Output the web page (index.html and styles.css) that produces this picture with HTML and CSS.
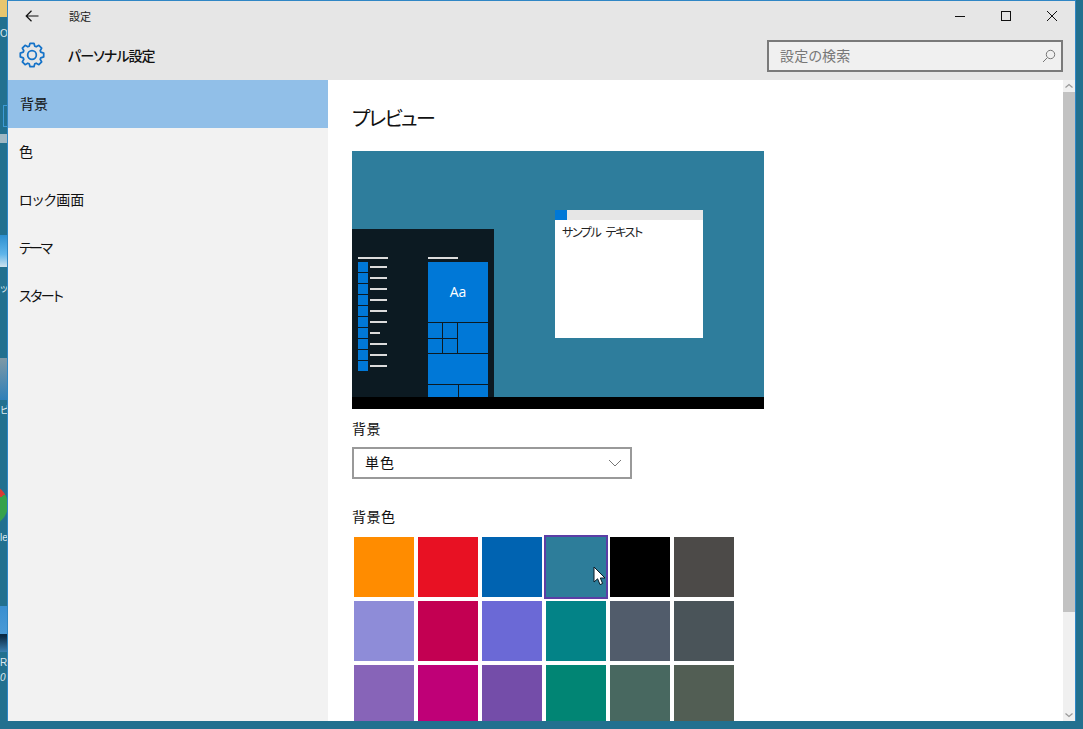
FILE: index.html
```html
<!DOCTYPE html>
<html lang="ja">
<head>
<meta charset="utf-8">
<title>設定</title>
<link rel="stylesheet" href="styles.css">
</head>
<body>
<div class="desktop">
  <div class="d-item d-folder"></div>
  <div class="d-item d-text d-t1">Ov</div>
  <div class="d-item d-frame"></div>
  <div class="d-item d-stripe"></div>
  <div class="d-item d-blue"></div>
  <div class="d-item d-text d-t2">ッ</div>
  <div class="d-item d-gray"></div>
  <div class="d-item d-text d-t3">ビ</div>
  <div class="d-item d-chrome"></div>
  <div class="d-item d-text d-t4">le</div>
  <div class="d-item d-blue2"></div>
  <div class="d-item d-text d-t5">R</div>
  <div class="d-item d-text d-t6">0</div>

  <main class="window">
    <header class="head">
      <div class="titlebar">
        <svg class="back" width="14" height="12" viewBox="0 0 14 12"><path d="M6.5 .8 1.2 6l5.3 5.2M1.2 6H13.5" fill="none" stroke="#111" stroke-width="1.2"/></svg>
        <span class="app-name">設定</span>
        <div class="controls">
          <svg width="12" height="12" viewBox="0 0 12 12"><path d="M1 6.5H11" stroke="#111" stroke-width="1"/></svg>
          <svg width="12" height="12" viewBox="0 0 12 12"><rect x="1.5" y="1.5" width="9" height="9" fill="none" stroke="#111" stroke-width="1"/></svg>
          <svg width="12" height="12" viewBox="0 0 12 12"><path d="M1 1 11 11M11 1 1 11" stroke="#111" stroke-width="1"/></svg>
        </div>
      </div>
      <div class="pagebar">
        <svg class="gear" width="26" height="26" viewBox="0 0 24 24"><path d="M9.4 3.9 10.2 1.2H13.8L14.6 3.9 15.89 4.43 18.36 3.09 20.91 5.64 19.57 8.11 20.1 9.4 22.8 10.2V13.8L20.1 14.6 19.57 15.89 20.91 18.36 18.36 20.91 15.89 19.57 14.6 20.1 13.8 22.8H10.2L9.4 20.1 8.11 19.57 5.64 20.91 3.09 18.36 4.43 15.89 3.9 14.6 1.2 13.8V10.2L3.9 9.4 4.43 8.11 3.09 5.64 5.64 3.09 8.11 4.43Z" fill="none" stroke="#1472c8" stroke-width="1.6" stroke-linejoin="round"/><circle cx="12" cy="12" r="4" fill="none" stroke="#1472c8" stroke-width="1.6"/></svg>
        <h1 class="page-title">パーソナル設定</h1>
        <div class="search">
          <span>設定の検索</span>
          <svg width="14" height="14" viewBox="0 0 14 14"><circle cx="8.5" cy="5.5" r="4.2" fill="none" stroke="#777" stroke-width="1"/><path d="M5.4 8.6 1 13" stroke="#777" stroke-width="1"/></svg>
        </div>
      </div>
    </header>
    <div class="body">
      <nav class="side">
        <a class="nav-item selected">背景</a>
        <a class="nav-item">色</a>
        <a class="nav-item">ロック画面</a>
        <a class="nav-item nav-theme">テーマ</a>
        <a class="nav-item nav-start">スタート</a>
      </nav>
      <section class="content">
        <h2 class="section-title">プレビュー</h2>
        <div class="preview">
          <div class="p-main">
            <div class="p-start">
              <div class="p-col-left">
                <div class="p-hline"></div>
                <div class="p-list">
                  <div class="p-row"><i></i><b></b></div>
                  <div class="p-row"><i></i><b></b></div>
                  <div class="p-row"><i></i><b></b></div>
                  <div class="p-row"><i></i><b></b></div>
                  <div class="p-row"><i></i><b></b></div>
                  <div class="p-row"><i></i><b></b></div>
                  <div class="p-row"><i></i><b class="short"></b></div>
                  <div class="p-row"><i></i><b></b></div>
                  <div class="p-row"><i></i><b></b></div>
                  <div class="p-row"><i></i><b></b></div>
                </div>
              </div>
              <div class="p-col-right">
                <div class="p-hline"></div>
                <div class="p-tiles">
                  <div class="t-big">Aa</div>
                  <div class="t-mid">
                    <div class="t-quad"><i></i><i></i><i></i><i></i></div>
                    <div class="t-fill"></div>
                  </div>
                  <div class="t-wide"></div>
                  <div class="t-last"><i></i><i></i></div>
                </div>
              </div>
            </div>
            <div class="p-window">
              <div class="p-winbar"><i></i></div>
              <div class="p-wintext">サンプル テキスト</div>
            </div>
          </div>
          <div class="p-taskbar"></div>
        </div>

        <div class="label label-bg">背景</div>
        <div class="select">
          <span>単色</span>
          <svg width="14" height="8" viewBox="0 0 14 8"><path d="M1 1 7 7 13 1" fill="none" stroke="#777" stroke-width="1"/></svg>
        </div>

        <div class="label label-color">背景色</div>
        <div class="swatches">
          <div class="sw c1"></div><div class="sw c2"></div><div class="sw c3"></div>
          <div class="sw c4 current">
            <svg class="cursor" width="13" height="20" viewBox="0 0 13 20"><path d="M1 1V16L4.6 12.8 7 18.6 9.6 17.5 7.3 12H12Z" fill="#fff" stroke="#0a1a26" stroke-width="1"/></svg>
          </div>
          <div class="sw c5"></div><div class="sw c6"></div>
          <div class="sw c7"></div><div class="sw c8"></div><div class="sw c9"></div><div class="sw c10"></div><div class="sw c11"></div><div class="sw c12"></div>
          <div class="sw c13"></div><div class="sw c14"></div><div class="sw c15"></div><div class="sw c16"></div><div class="sw c17"></div><div class="sw c18"></div>
        </div>
      </section>
      <div class="scrollbar">
        <svg width="12" height="12" viewBox="0 0 12 12"><path d="M2.5 7.5 6 4.5 9.5 7.5" fill="none" stroke="#999" stroke-width="1.2"/></svg>
        <div class="thumb"></div>
        <svg class="down" width="12" height="12" viewBox="0 0 12 12"><path d="M2.5 4.5 6 7.5 9.5 4.5" fill="none" stroke="#999" stroke-width="1.2"/></svg>
      </div>
    </div>
  </main>
</div>
</body>
</html>
```

FILE: styles.css
```css
* { box-sizing: border-box; }
html, body { margin: 0; padding: 0; height: 100%; overflow: hidden; }
body { font-family: "Noto Sans CJK JP", "Liberation Sans", sans-serif; color: #111; font-feature-settings: "palt"; }
h1, h2 { margin: 0; font-weight: 400; }

.desktop { position: relative; width: 1083px; height: 729px; background: #22708f; overflow: hidden; }
.d-item { position: absolute; left: 0; }
.d-text { font-size: 10px; line-height: 12px; color: #dfe8ee; font-family: "Liberation Sans", "Noto Sans CJK JP", sans-serif; }
.d-folder { top: 0; width: 7px; height: 17px; background: #e8c66e; }
.d-t1 { top: 28px; }
.d-frame { top: 105px; left: 3px; width: 4px; height: 22px; border: 1px solid #3c9ad6; border-right: 0; }
.d-stripe { top: 134px; width: 7px; height: 9px; background: #9fb8c4; }
.d-blue { top: 235px; width: 7px; height: 32px; background: linear-gradient(#2d8fcf, #5fb5ea 60%, #cfe3ee); }
.d-t2 { top: 283px; }
.d-gray { top: 358px; width: 7px; height: 42px; background: linear-gradient(#7f99a6, #2f7fb8); }
.d-t3 { top: 405px; }
.d-chrome { top: 484px; left: -34px; width: 42px; height: 42px; border-radius: 50%; background: conic-gradient(from 60deg, #36a24a 0 120deg, #e9c33c 120deg 240deg, #d93a34 240deg); }
.d-t4 { top: 532px; }
.d-blue2 { top: 606px; width: 7px; height: 46px; background: linear-gradient(#3a8fd0, #4a9ad6 60%, #0b2a44 60%, #0b2a44 65%, #3a7fb0); }
.d-t5 { top: 657px; }
.d-t6 { top: 672px; font-style: italic; }

.window {
  position: absolute; left: 7px; top: 0; width: 1069px; height: 721px;
  border: 1px solid #2f86c5; border-bottom: 0;
  display: flex; flex-direction: column; background: #fff;
}
.head { height: 79px; background: #e6e6e6; flex: none; }
.titlebar { height: 30px; display: flex; align-items: center; padding-left: 17px; }
.back { margin-top: 0; }
.app-name { font-size: 11px; margin-left: 30px; margin-top: -1px; color: #222; }
.controls { margin-left: auto; display: flex; gap: 34px; margin-right: 17px; }
.pagebar { height: 48px; display: flex; align-items: center; padding-left: 11px; }
.gear { flex: none; margin-top: 0; }
.page-title { font-size: 14px; font-weight: 500; margin-left: 23px; margin-top: -1px; letter-spacing: -.9px; }
.search {
  margin-left: auto; margin-right: 12px; margin-top: 2px; width: 296px; height: 32px;
  border: 2px solid #7a7a7a; background: #f0f0f0; display: flex; align-items: center;
  justify-content: space-between; padding: 0 5px 0 11px; font-size: 14px; color: #777;
}
.search span { margin-top: -3px; letter-spacing: .2px; }

.body { flex: 1; display: flex; min-height: 0; overflow: hidden; }
.side { width: 320px; flex: none; background: #f2f2f2; display: flex; flex-direction: column; }
.nav-item { height: 48px; display: flex; align-items: center; padding: 0 0 3px 11px; font-size: 14px; color: #111; }
.nav-item.selected { background: #91bfe8; padding-left: 12px; }
.nav-theme { letter-spacing: -2.5px; }
.nav-start { letter-spacing: -1.5px; }

.content { flex: 1; padding-left: 24px; overflow: hidden; }
.section-title { font-size: 20px; line-height: 28px; margin-top: 24px; letter-spacing: -1.8px; }
.preview { margin-top: 19px; width: 412px; height: 258px; background: #2e7d9c; display: flex; flex-direction: column; }
.p-main { flex: 1; display: flex; align-items: flex-end; position: relative; }
.p-start { width: 142px; height: 168px; background: #0c1a22; display: flex; padding: 28px 0 0 6px; }
.p-col-left { width: 70px; }
.p-col-right { width: 60px; }
.p-hline { width: 30px; height: 2px; background: #dcdcdc; margin-bottom: 3px; }
.p-list { display: flex; flex-direction: column; gap: 1px; }
.p-row { height: 10px; display: flex; align-items: center; gap: 2px; }
.p-row i { width: 10px; height: 10px; background: #0078d7; }
.p-row b { width: 17px; height: 2px; background: #dcdcdc; }
.p-row b.short { width: 10px; }
.p-tiles { display: flex; flex-direction: column; gap: 1px; }
.t-big { height: 60px; background: #0078d7; color: #fff; font: 14px/60px "Open Sans", "Liberation Sans", sans-serif; text-align: center; }
.t-mid { display: flex; gap: 1px; height: 30px; }
.t-quad { width: 29px; display: grid; grid-template-columns: 14px 14px; grid-template-rows: 15px 14px; gap: 1px; }
.t-quad i, .t-fill, .t-wide, .t-last i { background: #0078d7; }
.t-fill { flex: 1; }
.t-wide { height: 30px; }
.t-last { display: flex; gap: 1px; height: 12px; }
.t-last i { flex: 1; }
.p-window { position: absolute; left: 203px; top: 59px; width: 148px; height: 128px; background: #fff; }
.p-winbar { height: 10px; background: #e6e6e6; }
.p-winbar i { display: block; width: 12px; height: 10px; background: #0078d7; }
.p-wintext { font-size: 12px; line-height: 16px; padding: 4px 0 0 7px; color: #222; letter-spacing: -1.4px; word-spacing: 4px; }
.p-taskbar { height: 12px; background: #000; flex: none; }

.label { font-size: 14px; line-height: 18px; letter-spacing: .5px; }
.label-bg { margin-top: 10px; }
.select {
  margin-top: 10px; width: 280px; height: 32px; border: 2px solid #999; background: #fff;
  display: flex; align-items: center; justify-content: space-between; padding: 0 8px 2px 11px;
  font-size: 14px; letter-spacing: 1px;
}
.select svg { margin-top: 2px; }
.label-color { margin-top: 28px; }
.swatches { margin: 12px 0 0 2px; display: grid; grid-template-columns: repeat(6, 60px); grid-auto-rows: 60px; gap: 4px; }
.sw { position: relative; }
.current { outline: 2px solid #5b3ea6; outline-offset: 0; }
.cursor { position: absolute; left: 47px; top: 29px; }
.c1 { background: #ff8c00; } .c2 { background: #e81123; } .c3 { background: #0063b1; }
.c4 { background: #2d7d9a; } .c5 { background: #000; } .c6 { background: #4c4a48; }
.c7 { background: #8e8cd8; } .c8 { background: #c30052; } .c9 { background: #6b69d6; }
.c10 { background: #038387; } .c11 { background: #515c6b; } .c12 { background: #4a5459; }
.c13 { background: #8764b8; } .c14 { background: #bf0077; } .c15 { background: #744da9; }
.c16 { background: #018574; } .c17 { background: #486860; } .c18 { background: #525e54; }

.scrollbar { width: 12px; flex: none; background: #f0f0f0; display: flex; flex-direction: column; }
.scrollbar svg { flex: none; }
.thumb { height: 520px; background: #c2c2c2; flex: none; }
.scrollbar .down { margin-top: auto; }
```
